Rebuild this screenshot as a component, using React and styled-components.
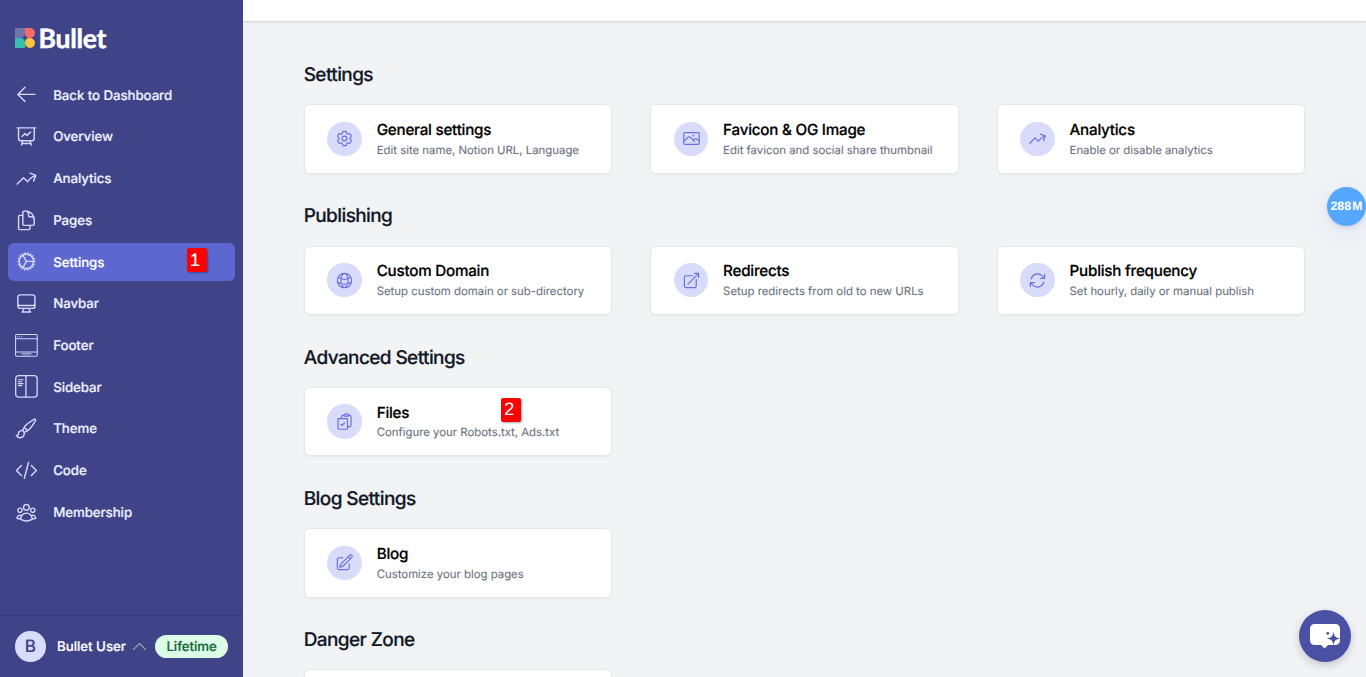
import React from 'react'
import styled, { createGlobalStyle } from 'styled-components'
import {
  HiOutlineArrowLeft,
  HiOutlinePresentationChartLine,
  HiOutlineArrowTrendingUp,
  HiOutlineDocumentDuplicate,
  HiOutlineCog,
  HiOutlineComputerDesktop,
  HiOutlinePaintBrush,
  HiOutlineCodeBracket,
  HiOutlineUserGroup,
  HiOutlineChevronUp,
  HiOutlineCog6Tooth,
  HiOutlinePhoto,
  HiOutlineGlobeAlt,
  HiOutlineArrowTopRightOnSquare,
  HiOutlineArrowPath,
  HiOutlineClipboardDocumentCheck,
  HiOutlinePencilSquare,
} from 'react-icons/hi2'

const FooterIcon = () => (
  <svg viewBox='0 0 24 24' fill='none' stroke='currentColor' strokeWidth='1.1'>
    <rect x='0.6' y='0.6' width='22.8' height='22.8' rx='1.2' />
    <path d='M0.5 5h23M0.5 19h23' />
    <path d='M2.2 2.8h1M4.4 2.8h1M6.6 2.8h1' />
    <path d='M6.5 20.9h11' strokeWidth='1.1' strokeDasharray='1.2 0.3' />
    <path d='M8 22.1h8' strokeWidth='0.5' />
  </svg>
)

const SidebarIcon = () => (
  <svg viewBox='0 0 24 24' fill='none' stroke='currentColor' strokeWidth='1.4'>
    <rect x='0.7' y='0.7' width='22.6' height='22.6' rx='3' />
    <path d='M11.5 0.7v22.6' />
    <path d='M3 4.9h6M3 7h4.5M3 9.1h6M3 11.2h4.5' strokeWidth='1.1' />
  </svg>
)

const LogoMark = () => (
  <svg width='20' height='20' viewBox='0 0 20 20'>
    <path d='M0 0h10v5.5A4.5 4.5 0 0 1 5.5 10H0z' fill='#6f74a9' />
    <path d='M10 0h5a5 5 0 0 1 0 10h-.5A4.5 4.5 0 0 1 10 5.5z' fill='#fb6a68' />
    <path d='M0 10h5.5a4.5 4.5 0 0 1 4.5 4.5V20H0z' fill='#36bfae' />
    <path d='M14.5 10h.5a5 5 0 1 1-5 5v-.5a4.5 4.5 0 0 1 4.5-4.5z' fill='#fcc43c' />
  </svg>
)

const ChatIcon = () => (
  <svg width='30' height='25' viewBox='0 0 30 25'>
    <path
      d='M4.5 0h21A4.5 4.5 0 0 1 30 4.5v12a4.5 4.5 0 0 1-4.5 4.5H18l-3.5 3.5-3.5-3.5H4.5A4.5 4.5 0 0 1 0 16.5v-12A4.5 4.5 0 0 1 4.5 0z'
      fill='white'
    />
    <path
      d='M23.5 7.5c.8 4.8 1.7 6 6.5 7-4.8 1-5.7 2.2-6.5 7-.8-4.8-1.7-6-6.5-7 4.8-1 5.7-2.2 6.5-7z'
      fill='#4a50a4'
    />
    <circle cx='17.8' cy='9.3' r='1.4' fill='#4a50a4' />
  </svg>
)

const menus = [
  { name: 'Back to Dashboard', icon: HiOutlineArrowLeft },
  { name: 'Overview', icon: HiOutlinePresentationChartLine },
  { name: 'Analytics', icon: HiOutlineArrowTrendingUp },
  { name: 'Pages', icon: HiOutlineDocumentDuplicate },
  { name: 'Settings', icon: HiOutlineCog, active: true, mark: '1' },
  { name: 'Navbar', icon: HiOutlineComputerDesktop },
  { name: 'Footer', icon: FooterIcon },
  { name: 'Sidebar', icon: SidebarIcon },
  { name: 'Theme', icon: HiOutlinePaintBrush },
  { name: 'Code', icon: HiOutlineCodeBracket },
  { name: 'Membership', icon: HiOutlineUserGroup },
]

const sections = [
  {
    title: 'Settings',
    cards: [
      { title: 'General settings', desc: 'Edit site name, Notion URL, Language', icon: HiOutlineCog6Tooth },
      { title: 'Favicon & OG Image', desc: 'Edit favicon and social share thumbnail', icon: HiOutlinePhoto },
      { title: 'Analytics', desc: 'Enable or disable analytics', icon: HiOutlineArrowTrendingUp },
    ],
  },
  {
    title: 'Publishing',
    cards: [
      { title: 'Custom Domain', desc: 'Setup custom domain or sub-directory', icon: HiOutlineGlobeAlt },
      { title: 'Redirects', desc: 'Setup redirects from old to new URLs', icon: HiOutlineArrowTopRightOnSquare },
      { title: 'Publish frequency', desc: 'Set hourly, daily or manual publish', icon: HiOutlineArrowPath },
    ],
  },
  {
    title: 'Advanced Settings',
    cards: [
      { title: 'Files', desc: 'Configure your Robots.txt, Ads.txt', icon: HiOutlineClipboardDocumentCheck, mark: '2' },
    ],
  },
  {
    title: 'Blog Settings',
    cards: [{ title: 'Blog', desc: 'Customize your blog pages', icon: HiOutlinePencilSquare }],
  },
  {
    title: 'Danger Zone',
    cards: [{}],
  },
]

const App = () => {
  return (
    <>
      <GlobalStyle />
      <Layout>
        <Side>
          <Logo>
            <LogoMark />
            <LogoText>Bullet</LogoText>
          </Logo>
          <Nav>
            {menus.map(({ name, icon: Icon, active, mark }) => (
              <NavItem key={name} $active={active}>
                <Icon />
                <NavLabel>{name}</NavLabel>
                {mark && <NavMark>{mark}</NavMark>}
              </NavItem>
            ))}
          </Nav>
          <User>
            <Avatar>B</Avatar>
            <UserName>Bullet User</UserName>
            <HiOutlineChevronUp />
            <Plan>Lifetime</Plan>
          </User>
        </Side>
        <Main>
          <TopBar />
          <Content>
            {sections.map((section) => (
              <Section key={section.title}>
                <SectionTitle>{section.title}</SectionTitle>
                <Grid>
                  {section.cards.map(({ title, desc, icon: Icon, mark }, i) => (
                    <Card key={i}>
                      {title && (
                        <>
                          <IconWrap>
                            <Icon />
                          </IconWrap>
                          <CardText>
                            <CardTitle>{title}</CardTitle>
                            <CardDesc>{desc}</CardDesc>
                          </CardText>
                        </>
                      )}
                      {mark && <CardMark>{mark}</CardMark>}
                    </Card>
                  ))}
                </Grid>
              </Section>
            ))}
          </Content>
        </Main>
        <Memory>
          288<span>M</span>
        </Memory>
        <ChatButton>
          <ChatIcon />
        </ChatButton>
      </Layout>
    </>
  )
}

const GlobalStyle = createGlobalStyle`
  * {
    box-sizing: border-box;
  }
  body {
    margin: 0;
    overflow: hidden;
    font-family: Inter, 'Liberation Sans', sans-serif;
    text-rendering: geometricPrecision;
    -webkit-font-smoothing: antialiased;
  }
`

const Layout = styled.div`
  display: flex;
  height: 100vh;
  overflow: hidden;
  background: #f2f3f5;
`

const Side = styled.aside`
  display: flex;
  flex-direction: column;
  flex-shrink: 0;
  width: 243px;
  background: #3f4388;
`

const Logo = styled.div`
  display: flex;
  align-items: center;
  gap: 3.5px;
  height: 75.8px;
  padding-left: 15px;
`

const LogoText = styled.span`
  color: white;
  font-family: Lato, sans-serif;
  font-size: 26.5px;
  font-weight: 700;
  letter-spacing: -0.25px;
  line-height: 26px;
  -webkit-text-stroke: 0.5px white;
`

const Nav = styled.nav`
  display: flex;
  flex-direction: column;
  flex: 1;
  gap: 3.73px;
  padding: 0 7.6px;
`

const NavItem = styled.a`
  display: flex;
  position: relative;
  align-items: center;
  gap: 15.2px;
  height: 38px;
  padding: 0 7.6px;
  border-radius: 5.7px;
  background: ${(props) => (props.$active ? '#5d67d0' : 'transparent')};
  color: ${(props) => (props.$active ? 'white' : '#eef0ff')};
  font-size: 13.3px;
  font-weight: 500;
  letter-spacing: -0.08px;
  -webkit-text-stroke: 0.2px currentColor;
  svg {
    width: 22.8px;
    height: 22.8px;
    color: #d4d7ff;
  }
`

const NavLabel = styled.span`
  padding-top: 1.8px;
`

// 红色步骤标记
const Mark = styled.span`
  position: absolute;
  width: 20px;
  height: 24px;
  padding-left: 3px;
  border-radius: 2px;
  background: #ff0000;
  box-shadow: 1px 1px 2px rgba(0, 0, 0, 0.35);
  color: white;
  font-family: 'Liberation Sans', sans-serif;
  font-size: 18px;
  font-weight: 400;
  letter-spacing: 0;
  line-height: 23px;
`

const NavMark = styled(Mark)`
  top: 5.5px;
  left: 179.4px;
  line-height: 24.5px;
`

const CardMark = styled(Mark)`
  top: 10px;
  left: 196.5px;
`

const User = styled.div`
  display: flex;
  align-items: center;
  height: 61.8px;
  padding: 0 15.2px;
  border-top: 1.5px solid #363a78;
  svg {
    width: 19px;
    height: 19px;
    margin: 0 6.3px 0 4px;
    color: #9ca3af;
    flex-shrink: 0;
  }
`

const Avatar = styled.div`
  display: flex;
  align-items: center;
  justify-content: center;
  flex-shrink: 0;
  width: 30.4px;
  height: 30.4px;
  margin-right: 11.4px;
  border-radius: 50%;
  background: #d9dbfa;
  color: #3f4388;
  font-size: 17px;
  font-weight: 500;
  -webkit-text-stroke: 0.2px currentColor;
`

const UserName = styled.span`
  padding-top: 1px;
  color: white;
  font-size: 13.3px;
  font-weight: 500;
  letter-spacing: -0.03px;
  white-space: nowrap;
  -webkit-text-stroke: 0.2px currentColor;
`

const Plan = styled.span`
  padding: 1px 11.2px 0;
  border-radius: 12px;
  background: #dcfce7;
  color: #166534;
  font-size: 13.3px;
  font-weight: 500;
  letter-spacing: -0.05px;
  line-height: 22.4px;
  -webkit-text-stroke: 0.2px currentColor;
`

const Main = styled.main`
  display: flex;
  flex-direction: column;
  flex: 1;
  min-width: 0;
`

const TopBar = styled.header`
  flex-shrink: 0;
  height: 21px;
  background: white;
  box-shadow: 0 1px 2px rgba(0, 0, 0, 0.16);
`

const Content = styled.div`
  display: flex;
  flex-direction: column;
  gap: 28.6px;
  padding: 40px 61px 0 60.7px;
`

const Section = styled.section`
  display: flex;
  flex-direction: column;
  gap: 16.3px;
`

const SectionTitle = styled.h2`
  margin: 0;
  color: #111827;
  font-size: 19px;
  font-weight: 500;
  letter-spacing: -0.6px;
  line-height: 27px;
  -webkit-text-stroke: 0.2px currentColor;
`

const Grid = styled.div`
  display: grid;
  grid-template-columns: repeat(3, minmax(0, 1fr));
  gap: 38px;
`

const Card = styled.div`
  display: flex;
  position: relative;
  align-items: center;
  height: 69.4px;
  padding: 0 22.8px;
  border: 1px solid #e5e7eb;
  border-radius: 5.7px;
  background: white;
  box-shadow: 0 1px 2px rgba(0, 0, 0, 0.05);
`

const IconWrap = styled.div`
  display: flex;
  align-items: center;
  justify-content: center;
  flex-shrink: 0;
  width: 34.2px;
  height: 34.2px;
  margin-right: 15px;
  border-radius: 50%;
  background: #d9dbfa;
  svg {
    width: 19px;
    height: 19px;
    color: #6871e3;
  }
`

const CardText = styled.div`
  display: flex;
  flex-direction: column;
  padding-top: 0.4px;
`

const CardTitle = styled.h3`
  margin: 0;
  color: black;
  font-size: 15.2px;
  font-weight: 500;
  letter-spacing: -0.23px;
  line-height: 22.8px;
  -webkit-text-stroke: 0.2px currentColor;
`

const CardDesc = styled.p`
  margin: 0;
  color: #6b7280;
  font-size: 11.4px;
  letter-spacing: -0.01px;
  line-height: 17.4px;
  white-space: nowrap;
  -webkit-text-stroke: 0.1px currentColor;
`

const Memory = styled.div`
  display: flex;
  position: absolute;
  top: 187px;
  left: 1327px;
  align-items: center;
  justify-content: center;
  width: 39px;
  height: 39px;
  padding-bottom: 1px;
  border-radius: 50%;
  background: #56a7ff;
  box-shadow: 0 6px 28px rgba(90, 110, 255, 0.12), 0 2px 4px rgba(0, 0, 0, 0.1);
  color: white;
  font-family: 'Liberation Sans', sans-serif;
  font-size: 12.3px;
  font-weight: 700;
  span {
    margin-left: 1.2px;
  }
`

const ChatButton = styled.button`
  display: flex;
  position: absolute;
  top: 610px;
  left: 1299px;
  align-items: center;
  justify-content: center;
  width: 52px;
  height: 52px;
  padding: 0;
  border: none;
  border-radius: 50%;
  background: #4a50a4;
  box-shadow: 0 3px 9px rgba(0, 0, 0, 0.2);
`

export default App
